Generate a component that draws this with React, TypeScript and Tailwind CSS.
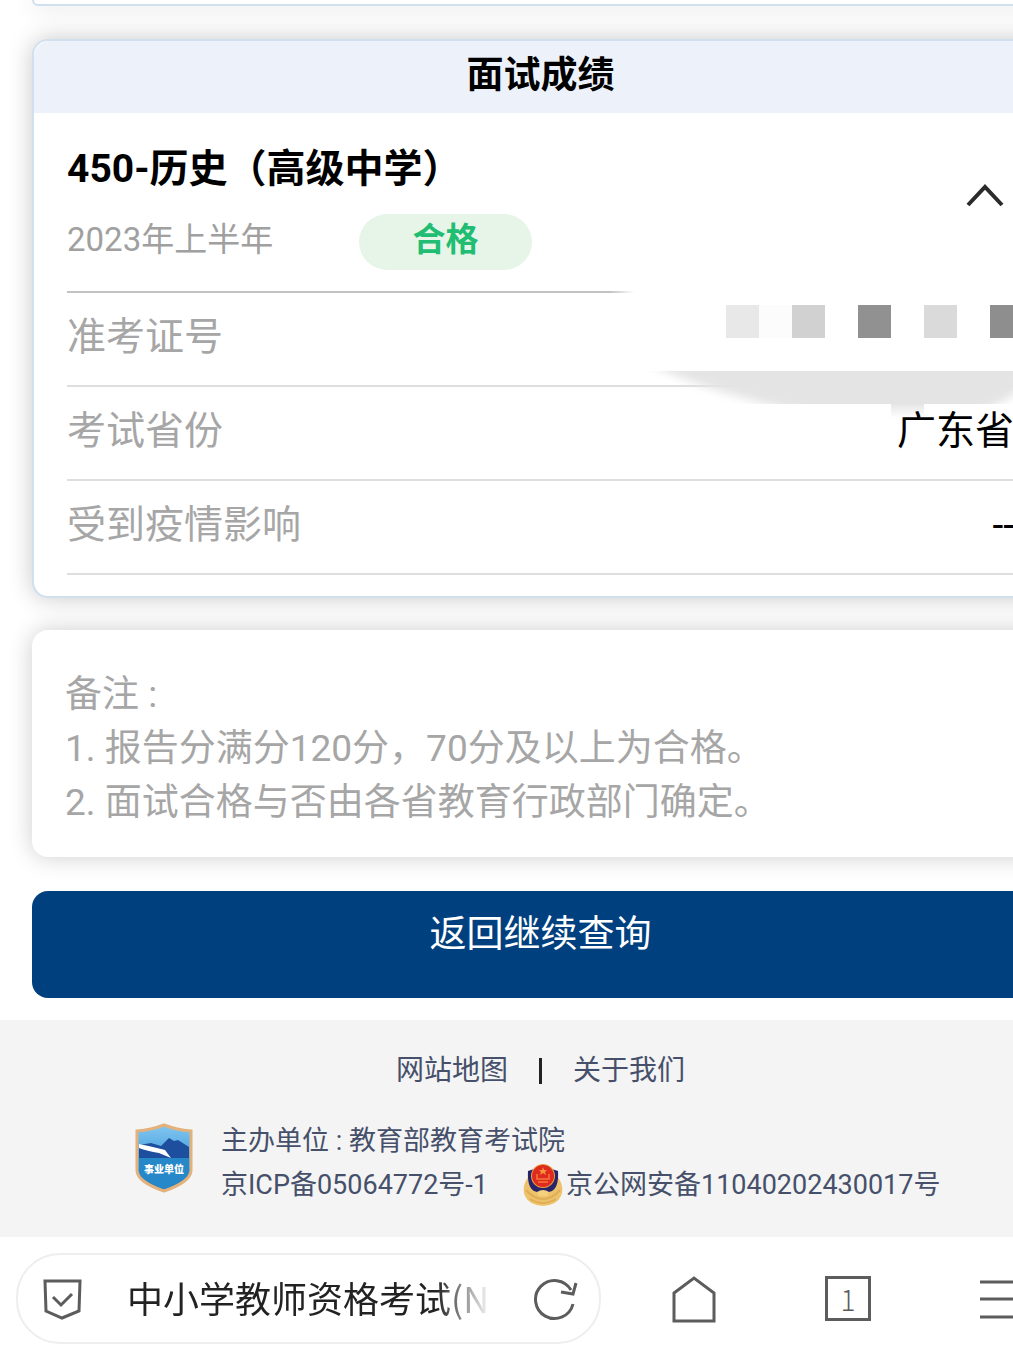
import { useState } from "react";

const MOSAIC = [
  { x: 106, fill: "#e8e8e8" },
  { x: 139, fill: "#fcfcfc" },
  { x: 172, fill: "#d1d1d1" },
  { x: 238, fill: "#919191" },
  { x: 304, fill: "#dadada" },
  { x: 370, fill: "#8e8e8e" },
];

const NOTES = ["1. 报告分满分120分，70分及以上为合格。", "2. 面试合格与否由各省教育行政部门确定。"];

// Hides the admission ticket number
function Redaction() {
  return (
    <svg
      className="absolute right-0 -top-2 w-[404px] h-[136px]"
      viewBox="-10 0 404 136"
      aria-hidden="true"
    >
      <defs>
        <linearGradient id="fadeIn" x1="0" x2="1" y1="0" y2="0">
          <stop offset="0" stopColor="#fff" stopOpacity="0" />
          <stop offset="0.06" stopColor="#fff" />
        </linearGradient>
        <linearGradient id="drip" x1="0" x2="0" y1="0" y2="1">
          <stop offset="0" stopColor="#e6e6e6" />
          <stop offset="1" stopColor="#e6e6e6" stopOpacity="0" />
        </linearGradient>
        <filter id="soften" x="-10%" y="-20%" width="120%" height="140%">
          <feGaussianBlur stdDeviation="5" />
        </filter>
        <clipPath id="band">
          <rect x="-10" y="86" width="404" height="33" />
        </clipPath>
      </defs>
      <rect x="-10" y="0" width="404" height="86" fill="url(#fadeIn)" />
      {MOSAIC.map((m) => (
        <rect key={m.x} x={m.x} y="20" width="33" height="33" fill={m.fill} />
      ))}
      <g clipPath="url(#band)">
        <path
          d="M0 60L36 82Q80 102 124 113Q160 123 210 136H340Q376 124 404 102V60Z"
          fill="#e4e4e4"
          filter="url(#soften)"
        />
      </g>
      <rect x="271" y="119" width="33" height="14" fill="url(#drip)" />
    </svg>
  );
}

function InstitutionBadge() {
  return (
    <svg className="w-[58px] h-[70px] shrink-0" viewBox="0 0 58 70" aria-hidden="true">
      <defs>
        <linearGradient id="sky" x1="0" x2="0" y1="0" y2="1">
          <stop offset="0" stopColor="#83c7f1" />
          <stop offset="0.5" stopColor="#459fdc" />
          <stop offset="1" stopColor="#1676b8" />
        </linearGradient>
      </defs>
      <path
        d="M2 8Q16 7 29 2Q42 7 56 8V48Q55 59 29 68Q3 59 2 48Z"
        fill="url(#sky)"
        stroke="#e3b27c"
        strokeWidth="3"
      />
      <path d="M4 22L16 20L26 23L34 15L39 18L43 17L54 24V35H4Z" fill="#1e4f9f" />
      <path d="M4 21Q14 23 22 25L30 27L36 35L24 30Q12 28 4 25Z" fill="#fff" />
      <path d="M4 35H54V47Q53 57 29 66Q5 57 4 47Z" fill="#2788c9" />
      <text
        x="29"
        y="50"
        textAnchor="middle"
        fontSize="10"
        fontWeight="900"
        fill="#fff"
        fontFamily="Noto Sans CJK SC, sans-serif"
      >
        事业单位
      </text>
    </svg>
  );
}

function PoliceBadge() {
  return (
    <svg className="w-[42px] h-11 shrink-0" viewBox="0 0 42 44" aria-hidden="true">
      <path
        d="M7 13Q-1 23 3 33Q7 42 21 43Q35 42 39 33Q43 23 35 13L31 26L21 31L11 26Z"
        fill="#edc26b"
      />
      <path d="M4 27Q12 36 21 36Q30 36 38 27M8 36Q21 44 34 36" fill="none" stroke="#dfae56" strokeWidth="2" />
      <path d="M21 1L27 5L36 8Q37 24 30 28Q21 32 12 28Q5 24 6 8L15 5Z" fill="#28246b" />
      <circle cx="21" cy="13" r="12" fill="#e5a23c" />
      <circle cx="21" cy="13" r="11" fill="#df2a20" />
      <path d="M21 4L22 7H25L23 9L24 12L21 10L18 12L19 9L17 7H20Z" fill="#f5933b" />
      <path d="M14 16H28M16 19H26M15 11V15M27 11V15" stroke="#ee6433" strokeWidth="2" />
      <path d="M15 29Q21 25 27 29L25 33H17Z" fill="#f4d27b" />
    </svg>
  );
}

function ResultCard() {
  const [open, setOpen] = useState(true);

  return (
    <section className="rounded-2xl border-2 border-[#d0e0ee] bg-white shadow-[0_0_24px_rgba(0,0,0,0.22)]">
      <h2 className="h-[72px] rounded-t-2xl bg-[#edf2fa] text-center text-[37px] leading-[70px] font-bold">
        面试成绩
      </h2>
      <div className="px-[33px] pt-[26px] pb-[21px]">
        <div className="flex items-center justify-between border-b-2 border-[#c2c2c2] pb-[21px]">
          <div>
            <h3 className="text-[39px] leading-[60px] font-bold">450-历史（高级中学）</h3>
            <div className="mt-[15px] flex items-center">
              <span className="w-[292px] pb-1 text-[33px] leading-[52px] text-[#a0a0a0]">2023年上半年</span>
              <span className="h-14 w-[173px] rounded-full bg-[#e7f5e8] text-center text-[33px] leading-[52px] font-bold text-[#20bd72]">
                合格
              </span>
            </div>
          </div>
          <button
            type="button"
            aria-label="展开或收起"
            aria-expanded={open}
            onClick={() => setOpen(!open)}
            className="mr-[9px] mb-5"
          >
            <svg className="h-7 w-10" viewBox="0 0 40 28" fill="none" stroke="#2b2b2b" strokeWidth="4">
              <path d={open ? "M3 24L20 6L37 24" : "M3 6L20 24L37 6"} />
            </svg>
          </button>
        </div>
        {open && (
          <dl className="text-[39px] leading-[88px]">
            <div className="relative h-[94px] border-b-2 border-[#dedede]">
              <dt className="text-[#a6a6a6]">准考证号</dt>
              <dd>
                <Redaction />
              </dd>
            </div>
            <div className="relative flex h-[94px] justify-between border-b-2 border-[#dedede]">
              <dt className="text-[#a6a6a6]">考试省份</dt>
              <dd>广东省</dd>
            </div>
            <div className="flex h-[94px] justify-between border-b-2 border-[#dedede]">
              <dt className="text-[#a6a6a6]">受到疫情影响</dt>
              <dd>--</dd>
            </div>
          </dl>
        )}
      </div>
    </section>
  );
}

function Footer() {
  return (
    <footer className="mt-[22px] bg-[#f4f4f4] pt-[31px] pb-[30px] text-[#46506a]">
      <nav className="-mr-[68px] flex items-center justify-center gap-[31px] text-[28px] leading-10">
        <a href="#sitemap">网站地图</a>
        <span className="h-[26px] w-[3px] bg-[#222]" />
        <a href="#about">关于我们</a>
      </nav>
      <div className="mt-7 flex items-start pl-[135px] text-[27px] leading-[44px] whitespace-nowrap">
        <div className="pt-1">
          <InstitutionBadge />
        </div>
        <div className="ml-7">
          <p>主办单位 : 教育部教育考试院</p>
          <p className="flex items-center">
            <a href="#icp">京ICP备05064772号-1</a>
            <a href="#police" className="ml-[34px] flex items-center">
              <PoliceBadge />
              <span className="ml-[2px]">京公网安备11040202430017号</span>
            </a>
          </p>
        </div>
      </div>
    </footer>
  );
}

function BrowserBar() {
  return (
    <div className="flex items-center pt-4 pb-[17px] pl-4 text-[#5c5c5c]">
      <div className="flex h-[91px] w-[585px] shrink-0 items-center rounded-[44px] border-2 border-[#eeeeee] pl-6">
        <svg className="h-[42px] w-10 shrink-0" viewBox="0 0 40 42" fill="none" stroke="currentColor" strokeWidth="3">
          <path d="M3 3H38L37 33L20 40L4 33Z" />
          <path d="M11 19L19 27L30 16" />
        </svg>
        <button
          type="button"
          className="ml-[45px] w-[364px] pb-1 text-left font-['Noto_Sans_CJK_SC',sans-serif] text-[36px] leading-[56px] whitespace-nowrap text-[#222] mask-r-from-85% mask-r-to-100%"
        >
          中小学教师资格考试(N
        </button>
        <button type="button" aria-label="刷新" className="ml-[42px]">
          <svg className="h-11 w-[46px]" viewBox="0 0 46 44" fill="none" stroke="currentColor" strokeWidth="3">
            <path d="M40 27A19 19 0 1 1 38 13" />
            <path d="M28 15L40 17L43 6" />
          </svg>
        </button>
      </div>
      <button type="button" aria-label="主页" className="ml-[70px] shrink-0">
        <svg className="h-12 w-[46px]" viewBox="0 0 46 48" fill="none" stroke="currentColor" strokeWidth="3">
          <path d="M3 18L23 3L43 18V46H3Z" />
        </svg>
      </button>
      <button
        type="button"
        aria-label="标签页"
        className="ml-[108px] h-[45px] w-[46px] shrink-0 border-3 border-[#5c5c5c] text-center font-['Noto_Sans_CJK_SC',sans-serif] text-[28px] leading-9 font-light"
      >
        1
      </button>
      <button type="button" aria-label="菜单" className="ml-[109px] shrink-0">
        <svg className="h-10 w-11" viewBox="0 0 44 40" stroke="currentColor" strokeWidth="3">
          <path d="M0 3H44M0 20H44M0 38H44" />
        </svg>
      </button>
    </div>
  );
}

export default function App() {
  return (
    <div
      lang="zh-CN"
      className="overflow-hidden bg-white font-[Roboto,'Noto_Sans_CJK_SC',sans-serif] text-black"
    >
      <main className="-mr-9 pl-8">
        <div className="h-[6px] rounded-b-2xl border-2 border-t-0 border-[#d0e0ee] bg-white shadow-[0_0_24px_rgba(0,0,0,0.22)]" />
        <div className="mt-[33px]">
          <ResultCard />
        </div>
        <section className="mt-8 rounded-2xl bg-white pt-[38px] pb-[27px] pl-[33px] text-[37px] leading-[54px] text-[#a6a6a6] shadow-[0_0_24px_rgba(0,0,0,0.2)]">
          <p>备注 :</p>
          {NOTES.map((note) => (
            <p key={note}>{note}</p>
          ))}
        </section>
        <button
          type="button"
          className="mt-[34px] block h-[107px] w-full rounded-2xl bg-[#00407e] pb-5 text-[37px] text-white"
        >
          返回继续查询
        </button>
      </main>
      <Footer />
      <BrowserBar />
    </div>
  );
}
